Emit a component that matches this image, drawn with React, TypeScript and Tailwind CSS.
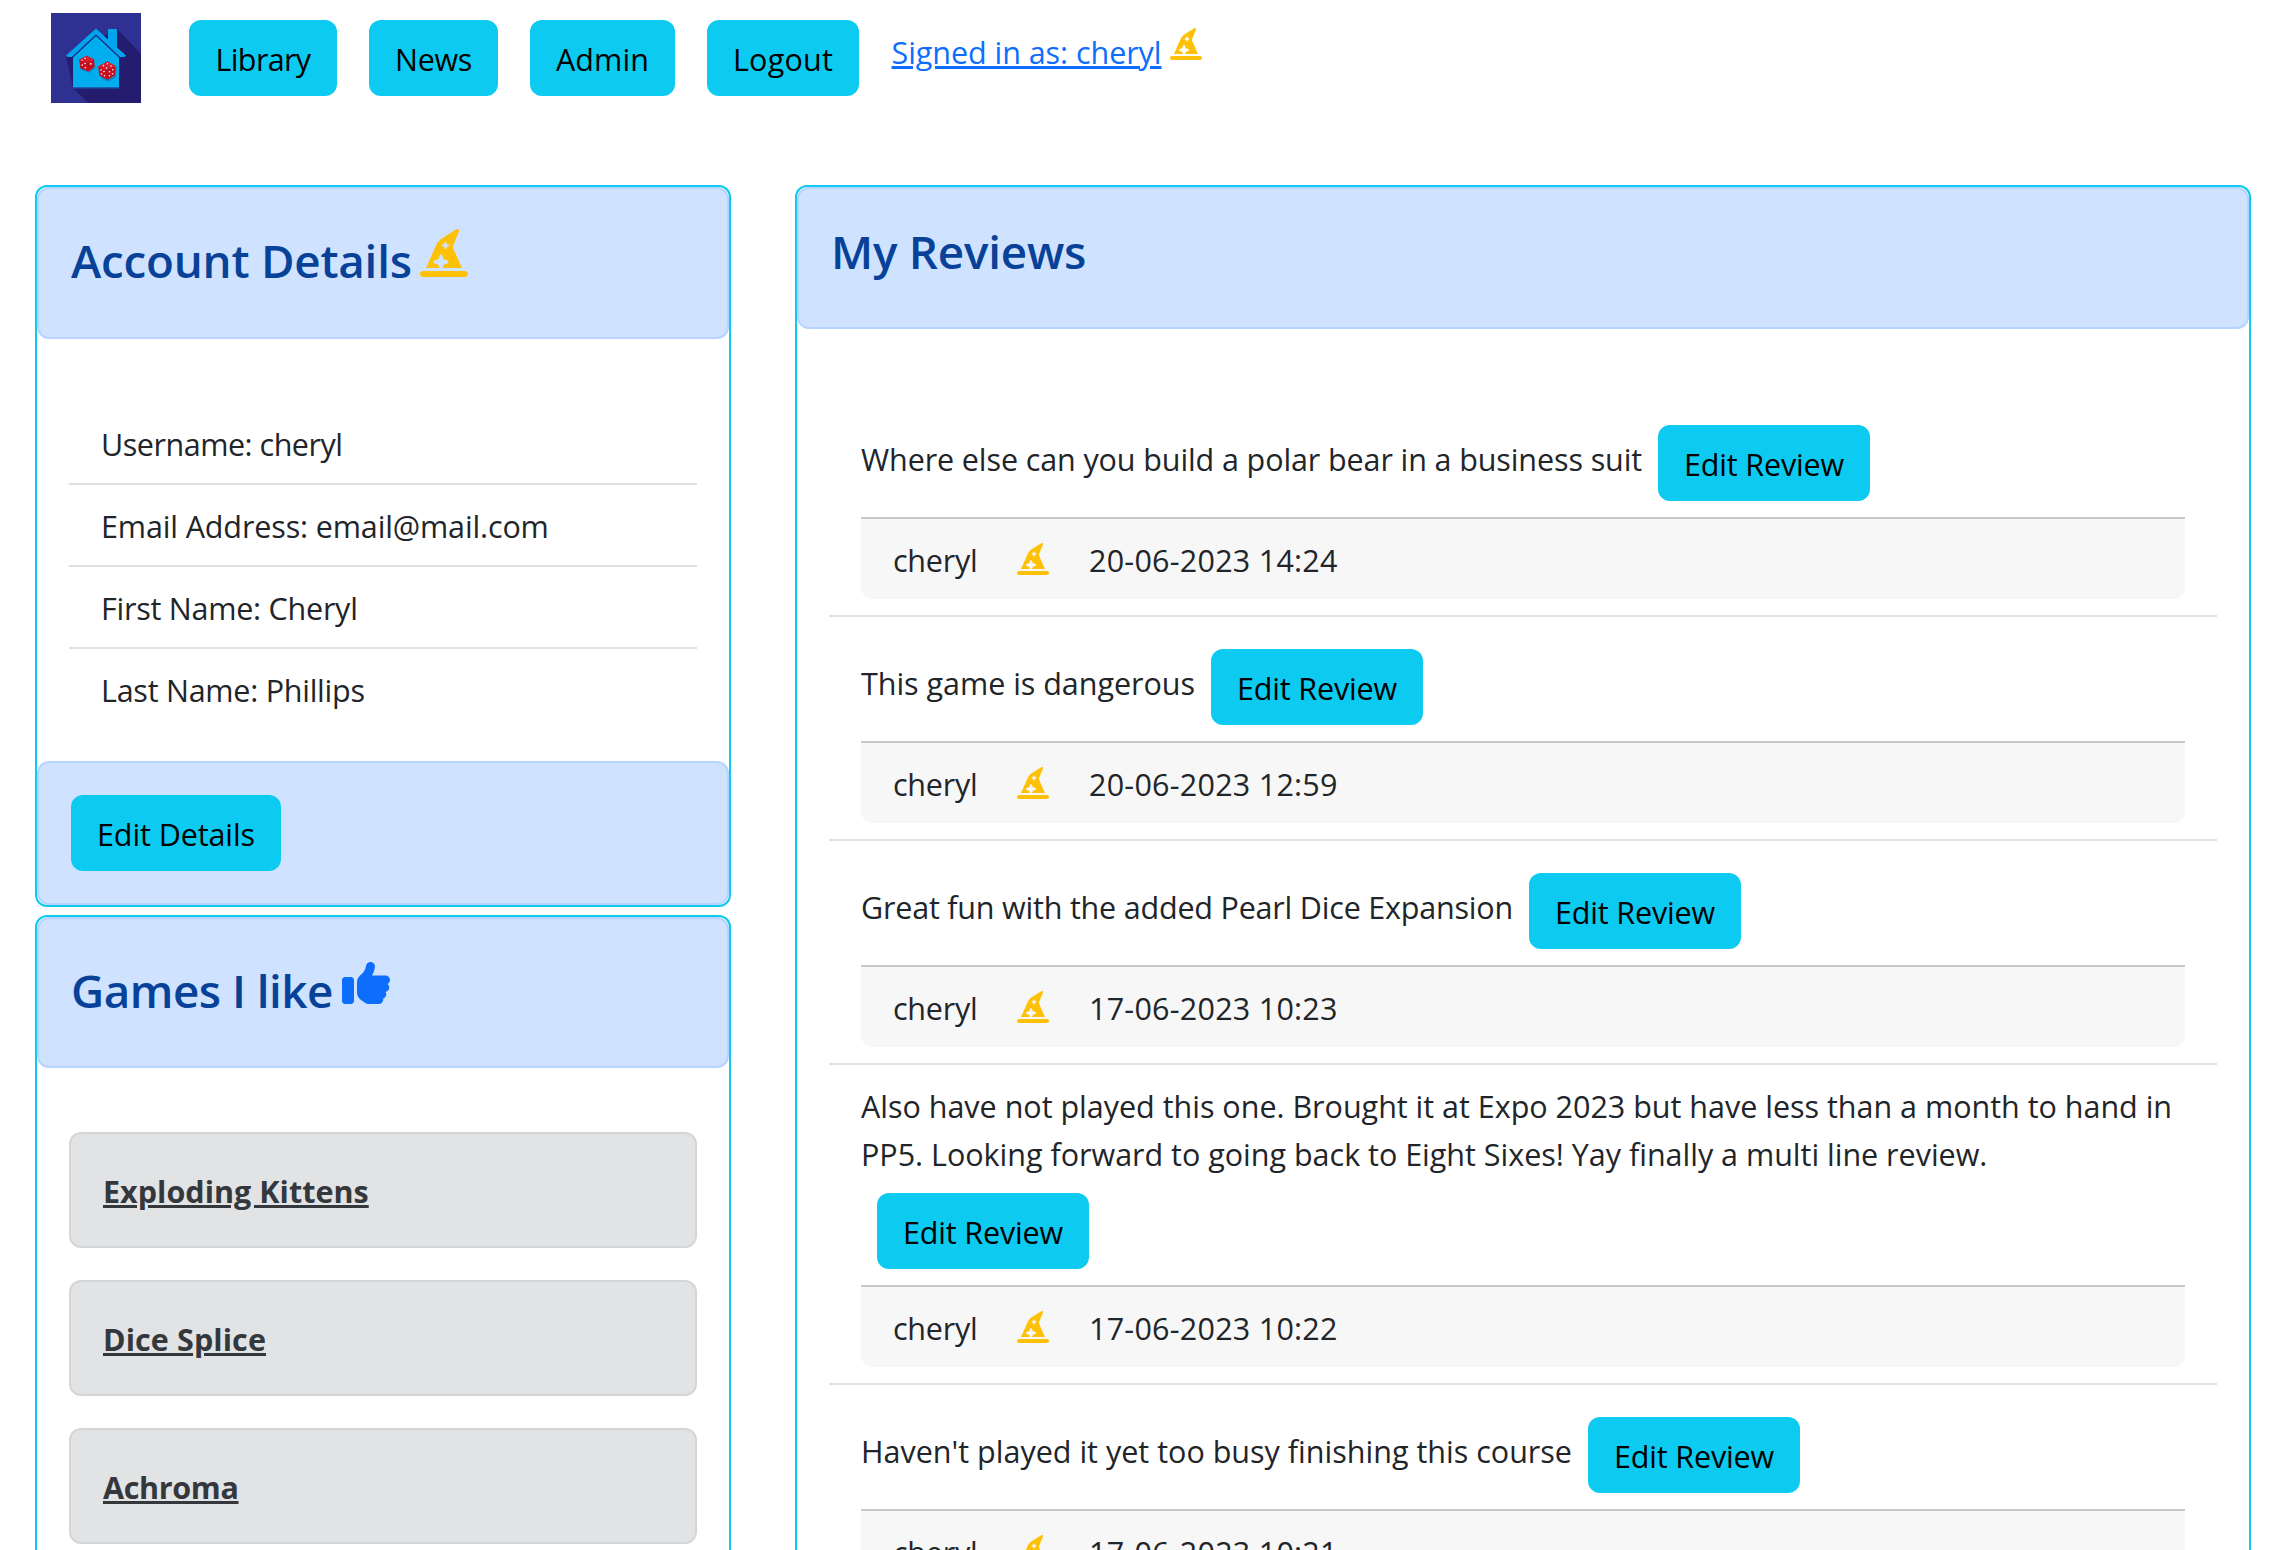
import type { ReactNode } from "react";
import { FaHatWizard, FaThumbsUp } from "react-icons/fa6";

function Logo() {
  return (
    <svg viewBox="0 0 90 90" className="block h-[90px] w-[90px] shrink-0" aria-label="Home">
      <rect width="90" height="90" fill="#2e3192" />
      <path d="M66 16 90 41V90H37L22 75 15 43Z" fill="#241c6e" />
      <path d="M22 41 15 43 22 51Z" fill="#241c6e" />
      <path d="M22 42 45 20 68 42V74.5H22Z" fill="#00aeef" />
      <path d="M22 74H68V75.5H22Z" fill="#1b5fb0" />
      <path d="M57 16H66V34.5L75 42.5 73.5 44H69L45 21.5 21 44H16.5L15 42.5 45 15.5 57 26.5Z" fill="#00a4ec" />
      <path d="M21.5 44.2 45 22.2 68.5 44.2" fill="none" stroke="#1c2f86" strokeWidth="1.3" />
      <g>
        <path d="M28.5 47 36.5 43.5 43 47.5 44 55.5 38 60 30 57Z" fill="#1668a8" opacity=".5" />
        <path d="M28.3 46.5 35.5 42.8 43.2 46.5 43.6 53.8 37.5 58.4 29.3 55.3Z" fill="#c40d1e" />
        <path d="M28.3 46.5 35.5 42.8 43.2 46.5 36.5 49.5Z" fill="#d91c2e" />
        <g fill="#fff">
          <circle cx="34" cy="45.3" r=".8" />
          <circle cx="31" cy="47.3" r=".7" />
          <circle cx="31.2" cy="52" r=".8" />
          <circle cx="34" cy="50.5" r=".8" />
          <circle cx="34.3" cy="54.8" r=".8" />
          <circle cx="39.7" cy="50.8" r=".9" />
        </g>
      </g>
      <g>
        <path d="M48 54 57.5 49 66 54.5 65 64.5 57.5 69 49.5 65Z" fill="#1668a8" opacity=".5" />
        <path d="M47.2 53.5 56.5 48.4 64.6 53.3 63.8 62.4 56.5 66.8 48.3 62.4Z" fill="#c40d1e" />
        <path d="M47.2 53.5 56.5 48.4 64.6 53.3 55.5 57.5Z" fill="#d91c2e" />
        <g fill="#fff">
          <circle cx="56.5" cy="50.8" r=".8" />
          <circle cx="52.5" cy="52.6" r=".8" />
          <circle cx="60" cy="53" r=".8" />
          <circle cx="55.5" cy="55" r=".8" />
          <circle cx="50" cy="57" r=".8" />
          <circle cx="53" cy="58.5" r=".8" />
          <circle cx="50.5" cy="61" r=".8" />
          <circle cx="53.5" cy="62.8" r=".8" />
          <circle cx="58.5" cy="58.8" r=".8" />
          <circle cx="61.8" cy="56.8" r=".8" />
          <circle cx="58.5" cy="62.8" r=".8" />
          <circle cx="61.5" cy="60.7" r=".8" />
        </g>
      </g>
    </svg>
  );
}

function Button({ children, className }: { children: ReactNode; className: string }) {
  return (
    <button
      className={`inline-block h-[76px] rounded-xl bg-[#0dcaf0] pt-[15px] pb-[13px] text-center align-middle leading-[48px] whitespace-nowrap text-black ${className}`}
    >
      {children}
    </button>
  );
}

const alertBox = "rounded-xl border-2 border-[#b6d4fe] bg-[#cfe2ff] text-[#084298]";
const card = "rounded-xl border-2 border-[#0dcaf0] bg-white";

const details = [
  { text: "Username: cheryl", tracking: "tracking-[-0.48px]" },
  { text: "Email Address: email@mail.com", tracking: "tracking-[-0.13px]" },
  { text: "First Name: Cheryl", tracking: "tracking-[-0.24px]" },
  { text: "Last Name: Phillips", tracking: "tracking-[-0.25px]" },
];

const games = [
  { title: "Exploding Kittens", tracking: "tracking-[0.025px]" },
  { title: "Dice Splice", tracking: "tracking-[0.098px]" },
  { title: "Achroma", tracking: "tracking-[-0.339px]" },
];

const reviews = [
  { text: "Where else can you build a polar bear in a business suit", date: "20-06-2023 14:24", tracking: "tracking-[-0.11px]" },
  { text: "This game is dangerous", date: "20-06-2023 12:59", tracking: "tracking-[-0.03px]" },
  { text: "Great fun with the added Pearl Dice Expansion", date: "17-06-2023 10:23", tracking: "tracking-[-0.201px]" },
  {
    text: "Also have not played this one. Brought it at Expo 2023 but have less than a month to hand in PP5. Looking forward to going back to Eight Sixes! Yay finally a multi line review.",
    date: "17-06-2023 10:22",
    tracking: "tracking-[-0.01px]",
    long: true,
  },
  { text: "Haven't played it yet too busy finishing this course", date: "17-06-2023 10:21", tracking: "tracking-[0.008px]" },
];

export default function App() {
  return (
    <div className="h-[1550px] w-full overflow-hidden bg-white font-['Open_Sans','Noto_Sans',sans-serif] text-[30.5px] leading-[48px] text-[#212529]">
      <nav className="flex h-[185px] items-start pt-[13px] pl-[51px]">
        <Logo />
        <div className="mt-[7px] ml-12 flex gap-8">
          <Button className="w-[148px] tracking-[-0.65px]">Library</Button>
          <Button className="w-[129px] tracking-[-0.315px]">News</Button>
          <Button className="w-[145px] tracking-[0.083px]">Admin</Button>
          <Button className="w-[152px] tracking-[0.208px]">Logout</Button>
        </div>
        <a
          href="#account"
          className="mt-[15px] ml-[32.5px] whitespace-nowrap tracking-[-0.052px] text-[#0d6efd] underline decoration-[3px] underline-offset-[2px]"
        >
          Signed in as: cheryl
        </a>
        <FaHatWizard className="mt-[15px] ml-[8.5px] h-8 w-8 text-[#ffc107]" />
      </nav>

      <main className="flex items-start gap-16 pr-9 pl-[35px]">
        <aside className="flex w-[696px] shrink-0 flex-col gap-2">
          <section id="account" className={`h-[722px] ${card}`}>
            <header className={`flex h-[152px] px-8 pt-8 ${alertBox}`}>
              <h4 className="mt-[10px] text-[45.75px] leading-[58px] font-semibold tracking-[-0.22px] whitespace-nowrap">
                Account Details
              </h4>
              <FaHatWizard className="mt-2 ml-2 h-12 w-12 text-[#ffc107]" />
            </header>
            <ul className="px-8 pt-16">
              {details.map((d) => (
                <li
                  key={d.text}
                  className={`h-[82px] border-b-2 border-[#dfdfdf] px-8 pt-[17px] last:border-transparent ${d.tracking}`}
                >
                  {d.text}
                </li>
              ))}
            </ul>
            <footer className={`mt-[30px] h-[144px] p-8 ${alertBox}`}>
              <Button className="w-[210px] tracking-[-0.093px]">Edit Details</Button>
            </footer>
          </section>

          <section className={`h-[722px] ${card}`}>
            <header className={`flex h-[151px] px-8 pt-8 ${alertBox}`}>
              <h4 className="mt-[10px] text-[45.75px] leading-[58px] font-semibold tracking-[-0.5px] whitespace-nowrap">
                Games I like
              </h4>
              <FaThumbsUp className="mt-2 ml-[9px] h-12 w-12 text-[#0d6efd]" />
            </header>
            <div className="flex flex-col gap-8 px-8 pt-16">
              {games.map((g) => (
                <div key={g.title} className="h-[116px] rounded-xl border-2 border-[#d3d6d8] bg-[#e2e3e5] px-8 pt-[33px]">
                  <a
                    href="#game"
                    className={`font-bold text-[#34383c] underline decoration-[3px] underline-offset-[2px] ${g.tracking}`}
                  >
                    {g.title}
                  </a>
                </div>
              ))}
            </div>
          </section>
        </aside>

        <section className={`h-[1400px] min-w-0 flex-1 ${card}`}>
          <header className={`h-[142px] px-8 pt-[33px] ${alertBox}`}>
            <h4 className="text-[45.75px] leading-[58px] font-semibold tracking-[-0.22px]">My Reviews</h4>
          </header>
          <ul className="px-8 pt-16">
            {reviews.map((r) => (
              <li
                key={r.date}
                className={`border-b-2 border-[#dfdfdf] px-8 pb-4 ${r.long ? "pt-[17px]" : "pt-4"}`}
              >
                <p className={r.tracking}>
                  {r.text}
                  <Button className={`mb-4 ml-4 w-[212px] tracking-[-0.159px] ${r.long ? "mt-[15px]" : "mt-4"}`}>
                    Edit Review
                  </Button>
                </p>
                <footer className="flex h-[82px] items-start rounded-b-xl border-t-2 border-[#c8c8c8] bg-[#f7f7f7] pt-4 pl-8">
                  <span className="mt-px w-[86px] tracking-[-0.25px]">cheryl</span>
                  <FaHatWizard className="mt-2 ml-[38px] h-8 w-8 text-[#ffc107]" />
                  <span className="mt-px ml-10 tracking-[0.24px]">{r.date}</span>
                </footer>
              </li>
            ))}
          </ul>
        </section>
      </main>
    </div>
  );
}
